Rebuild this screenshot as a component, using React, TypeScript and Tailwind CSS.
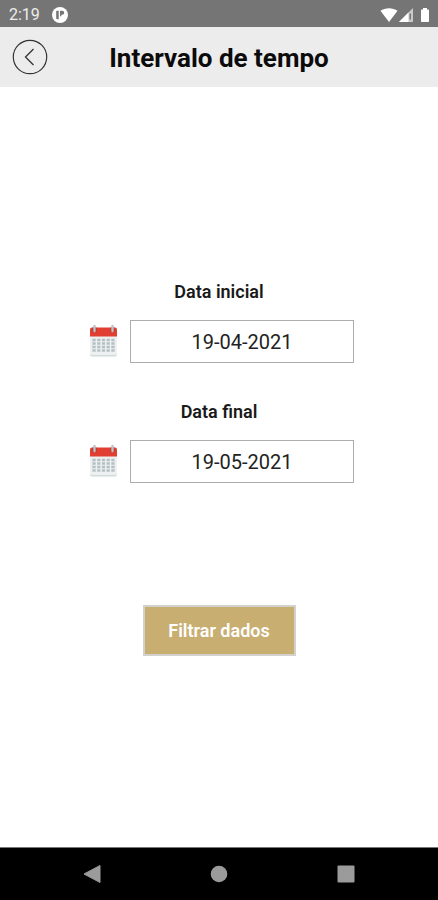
import React, { useState } from 'react';

const StatusBar: React.FC = () => (
  <div className="flex h-[27px] items-center justify-between bg-[#757575] pl-[9px] pr-2 pt-0.5 text-white">
    <div className="flex items-center gap-3">
      <span className="text-base leading-5 text-[#ededed]">2:19</span>
      <svg className="h-4 w-4" viewBox="0 0 16 16" aria-hidden="true">
        <circle cx="8" cy="8" r="8" fill="#fff" />
        <path d="M4.200 4.500q0-.8.800-.8h1.700v8.500H5.500q-1.300 0-1.300-1.300z" fill="#757575" />
        <path d="M8 3.700h2.200q2 0 2 2t-2 2H9.300v1.500H8z" fill="#757575" />
      </svg>
    </div>
    <div className="flex items-center">
      <svg className="h-4 w-[50px]" viewBox="0 0 50 16" aria-hidden="true">
        <path d="M0.500 3.800C5 0.300 13 0.300 17.500 3.800L9 15z" fill="#fff" />
        <path d="M33 1v14H19z" fill="#c9c9c9" />
        <path d="M28.500 5.500V15H19z" fill="#fff" />
        <path d="M29.500 6.500h1.500v6h-1.500z" fill="#757575" />
        <path d="M43 1h4v1.500h1.200q.8 0 .8.800v10.900q0 .8-.8.800h-6.400q-.8 0-.8-.8V3.300q0-.8.800-.8H43z" fill="#fff" />
      </svg>
    </div>
  </div>
);

const Header: React.FC = () => (
  <header className="grid h-[60px] grid-cols-[36px_1fr_36px] items-center bg-[#ececec] px-3">
    <button type="button" aria-label="Voltar" className="h-9 w-9">
      <svg className="h-9 w-9" viewBox="0 0 36 36" fill="none" stroke="#333" aria-hidden="true">
        <circle cx="18" cy="18" r="16.700" strokeWidth="1.200" />
        <path d="M21.500 10L13.500 18l8 8" strokeWidth="1.300" />
      </svg>
    </button>
    <h1 className="pt-0.5 text-center text-[26px] font-bold leading-8 text-[#0b0b0b]">Intervalo de tempo</h1>
  </header>
);

const CalendarIcon: React.FC = () => (
  <svg className="h-9 w-9 shrink-0" viewBox="0 0 36 36" aria-hidden="true">
    <path d="M6 11h27v19.500q0 2-2 2h-23q-2 0-2-2z" fill="#d3dadb" />
    <path d="M6 11h27v18.500q0 1.500-2 1.500h-23q-2 0-2-1.500z" fill="#edf1f1" />
    <path d="M6 12.500V5.500q0-2 2-2h23q2 0 2 2v7z" fill="#e23f33" />
    <path d="M8.500 3.500h4v4.500h-4zM26.500 3.500h4v4.500h-4z" fill="#b5352d" />
    <path d="M10.500 2v5M28.500 2v5" stroke="#bdc4c7" strokeWidth="2.400" strokeLinecap="round" />
    <path
      d="M8.500 16h22M8.500 19.500h22M8.500 23h22M8.500 26.500h22"
      stroke="#b6c0c4"
      strokeWidth="2.400"
      strokeDasharray="3.200 1.500"
    />
    <path d="M8.500 14.800v12.900M30.500 14.800v12.900" stroke="#cfd6d9" strokeWidth="0.800" />
  </svg>
);

interface DateFieldProps {
  id: string;
  label: string;
  value: string;
  onChange: (value: string) => void;
}

const DateField: React.FC<DateFieldProps> = ({ id, label, value, onChange }) => (
  <div className="flex w-full flex-col items-center gap-[18px]">
    <label htmlFor={id} className="text-lg font-semibold leading-5 text-[#1a1a1a]">
      {label}
    </label>
    <div className="flex w-full items-center gap-[10px]">
      <CalendarIcon />
      <input
        id={id}
        type="text"
        value={value}
        onChange={(e) => onChange(e.target.value)}
        className="h-[43px] min-w-0 flex-1 border border-[#adadad] bg-white text-center text-xl text-[#222]"
      />
    </div>
  </div>
);

const NavigationBar: React.FC = () => (
  <nav className="flex h-[53px] items-center justify-between border-t border-[#777] bg-black px-[82px]">
    <button type="button" aria-label="Anterior">
      <svg className="h-5 w-5" viewBox="0 0 20 20" aria-hidden="true">
        <path d="M18 1.500v17L2 10z" fill="#9b9b9b" stroke="#9b9b9b" strokeLinejoin="round" />
      </svg>
    </button>
    <button type="button" aria-label="Início">
      <svg className="h-5 w-5" viewBox="0 0 20 20" aria-hidden="true">
        <circle cx="10" cy="10" r="8.300" fill="#9b9b9b" />
      </svg>
    </button>
    <button type="button" aria-label="Recentes">
      <svg className="h-5 w-5" viewBox="0 0 20 20" aria-hidden="true">
        <rect x="1.500" y="1.500" width="17" height="17" rx="1" fill="#9b9b9b" />
      </svg>
    </button>
  </nav>
);

const App: React.FC = () => {
  const [startDate, setStartDate] = useState('19-04-2021');
  const [endDate, setEndDate] = useState('19-05-2021');

  return (
    <div className="flex min-h-screen flex-col bg-white font-[Roboto,sans-serif]">
      <StatusBar />
      <Header />
      <main className="flex flex-1 flex-col items-center justify-center pt-1">
        <div className="flex w-full max-w-[270px] flex-col gap-[39px]">
          <DateField id="start-date" label="Data inicial" value={startDate} onChange={setStartDate} />
          <DateField id="end-date" label="Data final" value={endDate} onChange={setEndDate} />
        </div>
        <button
          type="button"
          className="mt-[122px] h-[51px] w-[153px] border-2 border-[#d3d1cb] bg-[#c9ae72] text-lg font-semibold text-white"
        >
          Filtrar dados
        </button>
      </main>
      <NavigationBar />
    </div>
  );
};

export default App;
